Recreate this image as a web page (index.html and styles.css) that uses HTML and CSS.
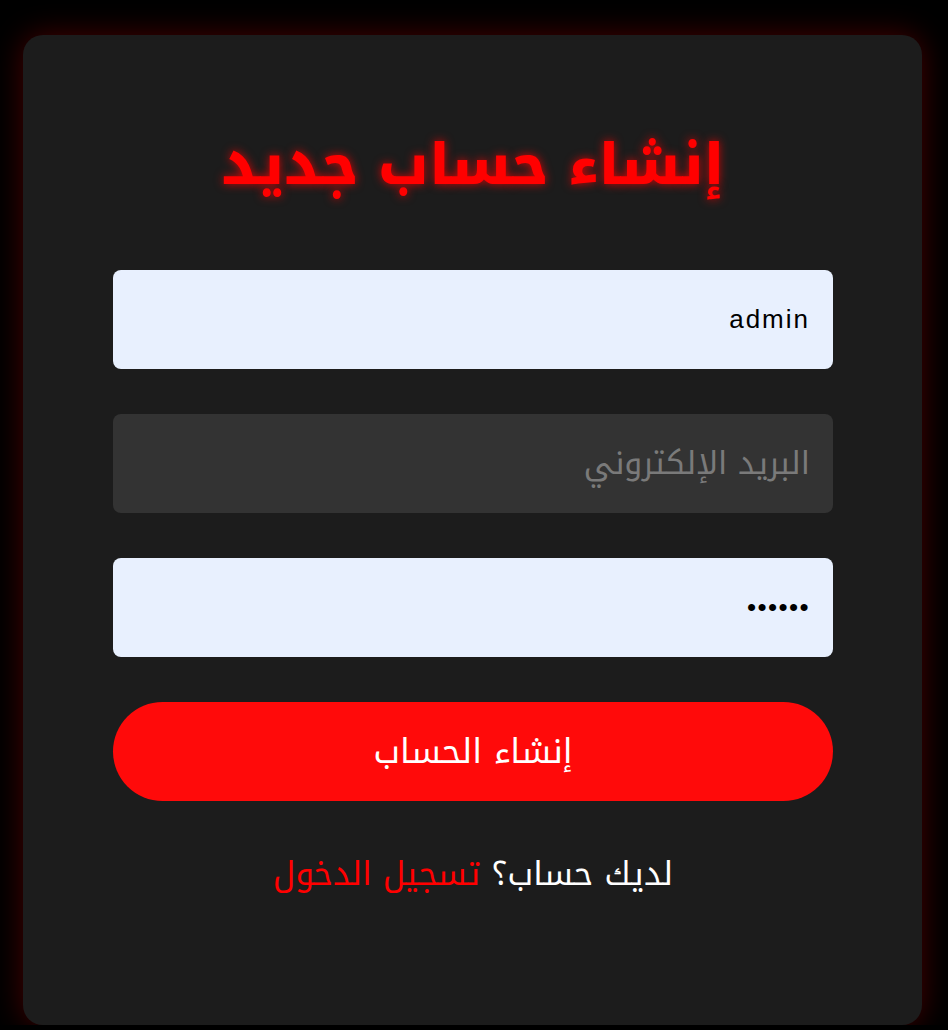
FILE: index.html
```html
<!DOCTYPE html>
<html lang="ar" dir="rtl">
<head>
<meta charset="utf-8">
<title>إنشاء حساب جديد</title>
<link rel="stylesheet" href="styles.css">
</head>
<body>
<div class="card">
  <h1 class="title">إنشاء حساب جديد</h1>
  <form class="form">
    <div class="field field-filled"><span class="value">admin</span></div>
    <div class="field field-empty"><span class="placeholder">البريد الإلكتروني</span></div>
    <div class="field field-filled"><span class="value dots">••••••</span></div>
    <button type="button" class="btn">إنشاء الحساب</button>
  </form>
  <p class="switch">لديك حساب؟ <a class="link" href="#">تسجيل الدخول</a></p>
</div>
</body>
</html>
```
FILE: styles.css
```css
html, body {
  margin: 0;
  padding: 0;
  background: #000;
}
body {
  font-family: "Noto Kufi Arabic", "Liberation Sans", sans-serif;
  padding: 35px 26px 0 23px;
}
.card {
  box-sizing: border-box;
  background: #1c1c1c;
  border-radius: 20px;
  padding: 90px 89px 90px 90px;
  box-shadow: 0 0 30px rgba(255, 0, 0, 0.28);
  min-height: 990px;
}
.title {
  margin: 0 0 65px;
  text-align: center;
  font-weight: 800;
  font-size: 57px;
  line-height: 80px;
  color: #ff0000;
  text-shadow: 0 0 10px rgba(255, 0, 0, 0.8);
}
.form {
  display: flex;
  flex-direction: column;
  gap: 45px;
}
.field {
  height: 99px;
  border-radius: 8px;
  display: flex;
  align-items: center;
  padding: 0 23px;
  box-sizing: border-box;
}
.field-filled {
  background: #e8f0fe;
}
.field-empty {
  background: #333333;
}
.value {
  font-family: "Liberation Sans", sans-serif;
  font-size: 26px;
  color: #000;
  letter-spacing: 2px;
}
.dots {
  font-size: 26px;
  letter-spacing: 1.4px;
}
.placeholder {
  font-size: 32px;
  color: #7a7a7a;
}
.btn {
  height: 99px;
  border: none;
  border-radius: 50px;
  background: #ff0a0a;
  color: #fff;
  font-family: inherit;
  font-size: 34px;
  cursor: pointer;
}
.switch {
  margin: 49px 0 0;
  text-align: center;
  font-size: 33px;
  line-height: 1.5;
  color: #fff;
}
.link {
  color: #ff0000;
  text-decoration: none;
}
```
